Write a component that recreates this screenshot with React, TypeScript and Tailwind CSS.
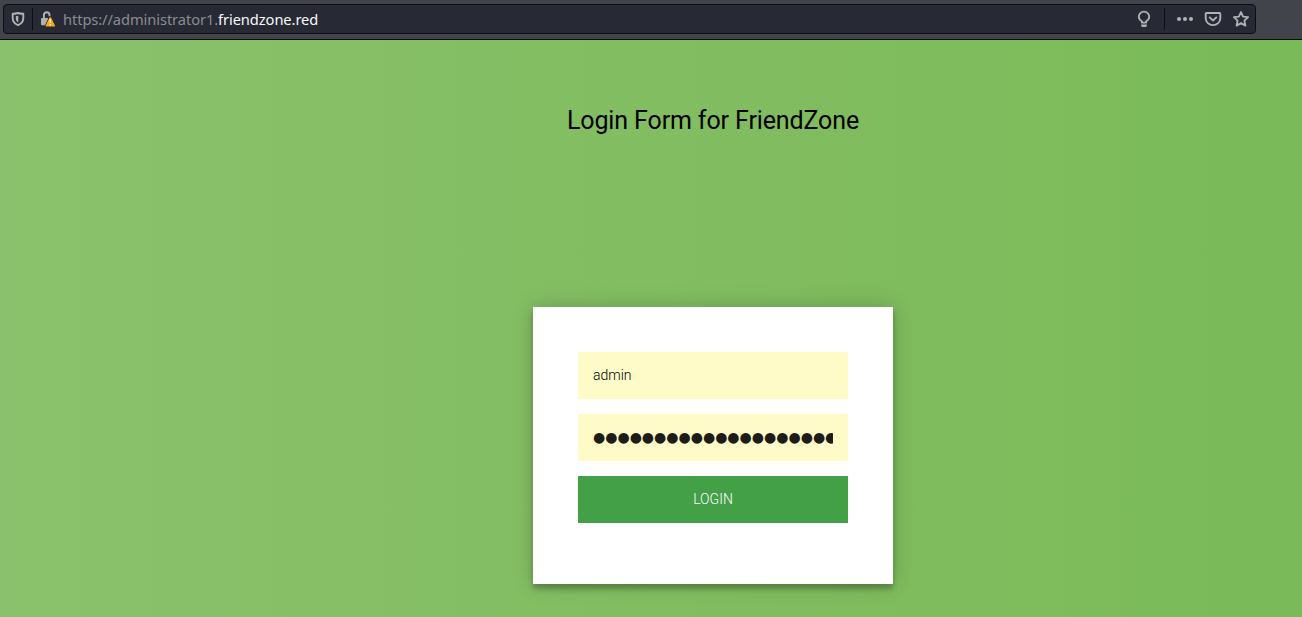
import React from 'react';

function ShieldIcon() {
  return (
    <svg width="16" height="16" viewBox="0 0 16 16" fill="none" className="shrink-0">
      <path d="M8 2c1.800.6 3.500.8 5.300.8v4.100c0 3.700-1.900 5.700-5.300 7.200-3.400-1.500-5.300-3.500-5.300-7.200V2.800C4.500 2.800 6.200 2.600 8 2z" stroke="#b1b1b5" strokeWidth="1.900" strokeLinejoin="round" />
      <path d="M8.300 4.700v6.900c-1.700-1-2.500-2.400-2.500-4.400V5.200c.9-.1 1.700-.2 2.500-.5z" fill="#b1b1b5" />
    </svg>
  );
}

function LockWarningIcon() {
  return (
    <svg width="16" height="16" viewBox="0 0 16 16" fill="none" className="shrink-0">
      <path d="M3.900 8V4a2.800 2.800 0 0 1 5.600 0v1.300" stroke="#b1b1b5" strokeWidth="1.900" />
      <path d="M2 7h6.400L5 14.300H2a1 1 0 0 1-1-1V8a1 1 0 0 1 1-1z" fill="#b1b1b5" />
      <path d="M10.300 6.800 14.300 14.800H6.300z" fill="#ffa60a" stroke="#ffa60a" strokeWidth="1.500" strokeLinejoin="round" />
      <path d="M10.300 8.300v3.700M10.300 12.900v1.500" stroke="#fff" strokeWidth="1.400" />
    </svg>
  );
}

function BulbIcon() {
  return (
    <svg width="16" height="18" viewBox="0 0 16 18" fill="none" stroke="#b1b1b5" strokeWidth="1.800" className="shrink-0">
      <path d="M5.900 12.700v-1.500C4 10.200 2.800 8.700 2.800 6.800a5.200 5.200 0 0 1 10.400 0c0 1.900-1.200 3.400-3.100 4.400v1.500z" strokeLinejoin="round" />
      <path d="M5 15.100h6M5.700 16.400h4.600" strokeWidth="1.300" />
    </svg>
  );
}

function DotsIcon() {
  return (
    <svg width="18" height="16" viewBox="0 0 18 16" fill="#b1b1b5" className="shrink-0">
      <circle cx="3" cy="8" r="2" />
      <circle cx="9" cy="8" r="2" />
      <circle cx="15" cy="8" r="2" />
    </svg>
  );
}

function PocketIcon() {
  return (
    <svg width="18" height="16" viewBox="0 0 18 16" fill="none" stroke="#b1b1b5" strokeWidth="1.900" strokeLinecap="round" strokeLinejoin="round" className="shrink-0">
      <path d="M2.500 2h13c.4 0 .8.400.8.800V7.200a7.300 6.900 0 0 1-14.600 0V2.800c0-.4.400-.8.800-.8z" />
      <path d="m5.700 6.400 3.300 3.100 3.300-3.100" />
    </svg>
  );
}

function StarIcon() {
  return (
    <svg width="18" height="18" viewBox="0 0 18 18" fill="none" stroke="#b1b1b5" strokeWidth="1.800" strokeLinejoin="round" className="shrink-0">
      <path d="m9 2 2.100 4.600 5 .6-3.700 3.400 1 5L9 13.100l-4.400 2.500 1-5-3.700-3.400 5-.6z" />
    </svg>
  );
}

function AddressBar() {
  return (
    <header className="h-10 border-b border-[#0c0c0d] bg-[#42444c] pt-1 pl-[3px]">
      <div className="flex h-[30px] w-[1253px] items-center rounded-[4px] border border-[#0d0e12] bg-[#272935] pl-1.5">
        <ShieldIcon />
        <div className="ml-1.5 h-[22px] w-px bg-[#0d0e12]" />
        <div className="ml-[7px] flex">
          <LockWarningIcon />
        </div>
        <div className="ml-[7px] font-['Noto_Sans',sans-serif] text-[14.667px] leading-5 tracking-[-0.08px] whitespace-nowrap text-[#8b8c91]">
          https://administrator1.<span className="text-[#f9f9fa]">friendzone.red</span>
        </div>
        <div className="ml-auto flex items-center pr-[5px]">
          <BulbIcon />
          <div className="ml-3 h-[22px] w-px bg-[#0d0e12]" />
          <div className="ml-[11px] flex items-center gap-2.5">
            <DotsIcon />
            <PocketIcon />
            <StarIcon />
          </div>
        </div>
      </div>
    </header>
  );
}

export default function App() {
  return (
    <div className="h-[617px] w-[1302px] overflow-hidden">
      <AddressBar />
      <main className="flex h-[577px] w-[1426px] flex-col items-center bg-[linear-gradient(to_right,#8dc26f_-247px,#76b852_1673px)] font-[Roboto,sans-serif]">
        <h2 className="mt-[65px] text-[25px] leading-8 font-normal tracking-[-0.12px] text-black">Login Form for FriendZone</h2>
        <form className="mt-[170px] flex h-[277px] w-[360px] flex-col gap-[15px] bg-white p-[45px] text-sm font-light shadow-[0_0_20px_0_rgba(0,0,0,0.2),0_5px_5px_0_rgba(0,0,0,0.24)]">
          <div className="flex h-[47px] items-center bg-[#fffbc8] px-[15px] pb-0.5 text-black">admin</div>
          <div className="flex h-[47px] items-center bg-[#fffbc8] px-[15px] pb-0.5">
            <div className="w-[240px] overflow-hidden font-['DejaVu_Sans',sans-serif] leading-5 font-normal whitespace-nowrap text-[#1e1c18]">●●●●●●●●●●●●●●●●●●●●</div>
          </div>
          <button type="button" className="h-[47px] bg-[#43a047] pb-0.5 text-white">LOGIN</button>
        </form>
      </main>
    </div>
  );
}
